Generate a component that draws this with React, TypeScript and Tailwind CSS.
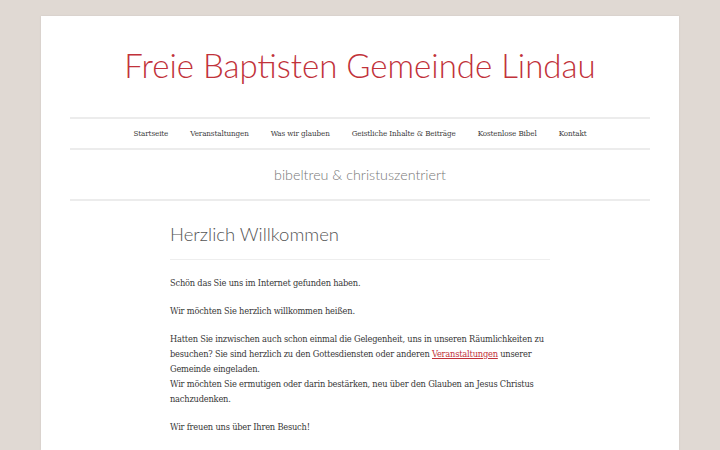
const navItems = [
  "Startseite",
  "Veranstaltungen",
  "Was wir glauben",
  "Geistliche Inhalte & Beiträge",
  "Kostenlose Bibel",
  "Kontakt",
];

const sans = "font-['Lato','Open_Sans',sans-serif]";
const serif = "font-['DejaVu_Serif','Liberation_Serif',serif] font-stretch-condensed";

function SiteHeader() {
  return (
    <header>
      {/* site title */}
      <div className="h-[101px] pt-[29px] text-center">
        <h1 className={`${sans} text-[33px] leading-[40px] font-light text-[#c1323a]`}>
          Freie Baptisten Gemeinde Lindau
        </h1>
      </div>
      {/* main menu */}
      <nav className="mx-[29px] h-[33px] border-y-2 border-[#ececec] flex items-center justify-center gap-[22px]">
        {navItems.map((item) => (
          <a key={item} className={`${serif} text-[8px] tracking-[-0.1px] text-[#3d3d3d] cursor-pointer`}>
            {item}
          </a>
        ))}
      </nav>
      {/* tagline */}
      <div className="mx-[29px] h-[51px] border-b-2 border-[#ececec] flex items-center justify-center">
        <p className={`${sans} text-[14.3px] font-light text-[#777]`}>bibeltreu &amp; christuszentriert</p>
      </div>
    </header>
  );
}

function WelcomeArticle() {
  return (
    <article className="w-[380px] mx-auto pt-[20px]">
      <h2 className={`${sans} text-[18.5px] leading-[26px] font-light text-[#555] pb-[12px] border-b border-[#eee]`}>
        Herzlich Willkommen
      </h2>
      <div className={`${serif} text-[9.2px] tracking-[-0.2px] leading-[15px] text-[#383838] pt-[15px]`}>
        <p className="mb-[13px]">Schön das Sie uns im Internet gefunden haben.</p>
        <p className="mb-[13px]">Wir möchten Sie herzlich willkommen heißen.</p>
        <p className="mb-[13px]">
          Hatten Sie inzwischen auch schon einmal die Gelegenheit, uns in unseren Räumlichkeiten zu besuchen? Sie sind
          herzlich zu den Gottesdiensten oder anderen{" "}
          <a className="text-[#c1323a] underline cursor-pointer">Veranstaltungen</a> unserer Gemeinde eingeladen.
          <br />
          Wir möchten Sie ermutigen oder darin bestärken, neu über den Glauben an Jesus Christus nachzudenken.
        </p>
        <p className="mb-[13px]">Wir freuen uns über Ihren Besuch!</p>
      </div>
    </article>
  );
}

export default function App() {
  return (
    <div className="min-h-screen bg-[#e0d9d3] px-[41px] pt-[16px]">
      <div className="bg-white min-h-[434px] shadow-[0_0_2px_rgba(0,0,0,0.08)]">
        <SiteHeader />
        <WelcomeArticle />
      </div>
    </div>
  );
}
